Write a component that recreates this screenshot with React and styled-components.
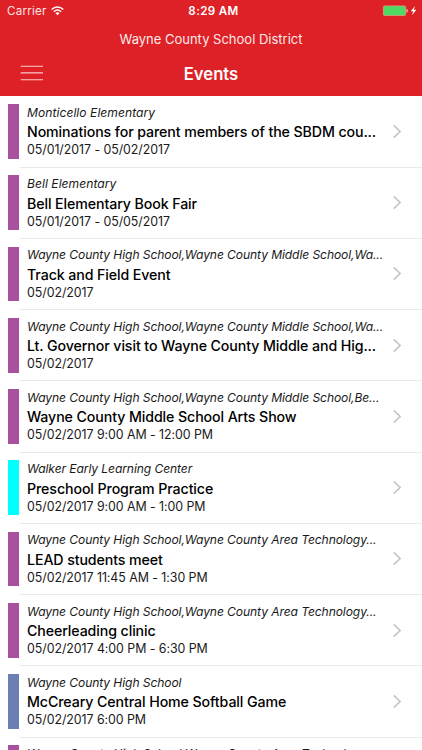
import styled, { createGlobalStyle } from "styled-components";

const GlobalStyle = createGlobalStyle`
    body {
        margin: 0;
        background-color: #ffffff;
        font-family: Inter, "Liberation Sans", sans-serif;
    }
`

const Screen = styled.div`
    width: 422px;
    height: 750px;
    overflow: hidden;
    background-color: #ffffff;
`

const Header = styled.header`
    height: 96px;
    display: flex;
    flex-direction: column;
    background-color: #de2126;
    color: #ffffff;
`

const StatusBar = styled.div`
    height: 22px;
    padding: 0 4px 0 7px;
    box-sizing: border-box;
    display: grid;
    grid-template-columns: 1fr auto 1fr;
    align-items: center;
    font-size: 11.6px;
    line-height: 22px;
`

const Carrier = styled.div`
    display: flex;
    align-items: center;
    gap: 4px;
    letter-spacing: 0.22px;
    color: #fde4e4;
`

const Clock = styled.span`
    margin-left: 2px;
    font-weight: 600;
    letter-spacing: 0.35px;
`

const Power = styled.div`
    display: flex;
    justify-content: flex-end;
`

const District = styled.div`
    height: 32px;
    line-height: 34px;
    text-align: center;
    font-size: 13px;
    color: #fdeaea;
`

const NavBar = styled.div`
    height: 38px;
    padding: 0 20px;
    display: grid;
    grid-template-columns: 1fr auto 1fr;
    align-items: center;
`

const MenuButton = styled.button`
    width: 24px;
    height: 17px;
    padding: 0;
    border: none;
    background: none;
    display: flex;
`

const Title = styled.h1`
    margin: 0;
    padding-top: 2px;
    font-size: 16.7px;
    line-height: 36px;
    font-weight: 600;
`

const List = styled.ul`
    margin: 0;
    padding: 0.4px 0 0;
    list-style: none;
`

const Row = styled.li`
    height: 71.26px;
    display: flex;
    padding-left: 8px;
`

const Stripe = styled.span`
    width: 11px;
    height: 54.6px;
    margin-top: 7.8px;
    flex: none;
    background-color: ${({ $color }) => $color};
`

const Content = styled.div`
    flex: 1;
    min-width: 0;
    margin-left: 1px;
    padding: 7.5px 20px 0 7px;
    box-sizing: border-box;
    border-bottom: 1px solid #e9e9eb;
    display: flex;
    justify-content: space-between;
`

const Info = styled.div`
    flex: 1;
    min-width: 0;
    display: flex;
    flex-direction: column;
    white-space: nowrap;
    color: #1a1a1a;
`

const School = styled.span`
    font-size: 12.1px;
    line-height: 17.4px;
    font-style: italic;
    letter-spacing: ${({ $long }) => $long ? "-0.1px" : "0.04px"};
`

const Name = styled.span`
    font-size: 14.2px;
    line-height: 21px;
    font-weight: 500;
    color: #000000;
    letter-spacing: -0.1px;
`

const When = styled.span`
    font-size: 12.4px;
    line-height: 16px;
    letter-spacing: -0.06px;
`

const Chevron = styled.svg`
    flex: none;
    margin-top: 19.9px;
`

const purple = "#a9509f"
const cyan = "#00ffff"
const blue = "#6b7fb3"

const events = [
    { color: purple, school: "Monticello Elementary", name: "Nominations for parent members of the SBDM cou...", when: "05/01/2017 - 05/02/2017" },
    { color: purple, school: "Bell Elementary", name: "Bell Elementary Book Fair", when: "05/01/2017 - 05/05/2017" },
    { color: purple, school: "Wayne County High School,Wayne County Middle School,Wa...", name: "Track and Field Event", when: "05/02/2017" },
    { color: purple, school: "Wayne County High School,Wayne County Middle School,Wa...", name: "Lt. Governor visit to Wayne County Middle and Hig...", when: "05/02/2017" },
    { color: purple, school: "Wayne County High School,Wayne County Middle School,Be...", name: "Wayne County Middle School Arts Show", when: "05/02/2017 9:00 AM - 12:00 PM" },
    { color: cyan, school: "Walker Early Learning Center", name: "Preschool Program Practice", when: "05/02/2017 9:00 AM - 1:00 PM" },
    { color: purple, school: "Wayne County High School,Wayne County Area Technology...", name: "LEAD students meet", when: "05/02/2017 11:45 AM - 1:30 PM" },
    { color: purple, school: "Wayne County High School,Wayne County Area Technology...", name: "Cheerleading clinic", when: "05/02/2017 4:00 PM - 6:30 PM" },
    { color: blue, school: "Wayne County High School", name: "McCreary Central Home Softball Game", when: "05/02/2017 6:00 PM" },
    { color: purple, school: "Wayne County High School,Wayne County Area Technology...", name: "", when: "" },
]

const Wifi = () => (
    <svg width="13" height="10" viewBox="0 0 13 10" fill="none" stroke="#fff" strokeWidth="1.5">
        <path d="M0.7 3.5C4 0.2 9 0.2 12.3 3.5" />
        <path d="M2.8 5.7C5 3.7 8 3.7 10.2 5.7" />
        <path d="M6.5 9.2L4.4 7.1C5.6 6 7.4 6 8.6 7.1Z" fill="#fff" stroke="none" />
    </svg>
)

const Battery = () => (
    <svg width="36" height="12" viewBox="0 0 36 12">
        <rect x="1.4" y="0.9" width="22.2" height="9.6" rx="1.2" fill="#4cd964" stroke="#d9a080" strokeWidth="0.8" />
        <path d="M24.5 4C26.2 4.2 26.2 7.4 24.5 7.6Z" fill="#fbd9d9" />
        <path d="M33 1L28.8 6.3H31.2L30 10.2L34.3 4.8H31.8Z" fill="#fff" />
    </svg>
)

const EventRow = ({ event }) => {
    return (
        <Row>
            <Stripe $color={event.color} />
            <Content>
                <Info>
                    <School $long={event.school.length > 22}>{event.school}</School>
                    <Name>{event.name}</Name>
                    <When>{event.when}</When>
                </Info>
                <Chevron width="10" height="15" viewBox="0 0 10 15" fill="none" stroke="#c4c4c9" strokeWidth="1.6">
                    <path d="M1.8 1.4L8.1 7.5L1.8 13.6" />
                </Chevron>
            </Content>
        </Row>
    )
}

const App = () => {
    return (
        <Screen>
            <GlobalStyle />
            <Header>
                <StatusBar>
                    <Carrier>
                        Carrier
                        <Wifi />
                    </Carrier>
                    <Clock>8:29 AM</Clock>
                    <Power>
                        <Battery />
                    </Power>
                </StatusBar>
                <District>Wayne County School District</District>
                <NavBar>
                    <MenuButton aria-label="Menu">
                        <svg width="24" height="17" viewBox="0 0 24 17" stroke="#fbc9ca" strokeWidth="1.1">
                            <path d="M0.7 1.3H23M0.7 7.9H23M0.7 14.7H23" />
                        </svg>
                    </MenuButton>
                    <Title>Events</Title>
                </NavBar>
            </Header>
            <List>
                {events.map((event, i) => (
                    <EventRow key={i} event={event} />
                ))}
            </List>
        </Screen>
    )
}

export default App
